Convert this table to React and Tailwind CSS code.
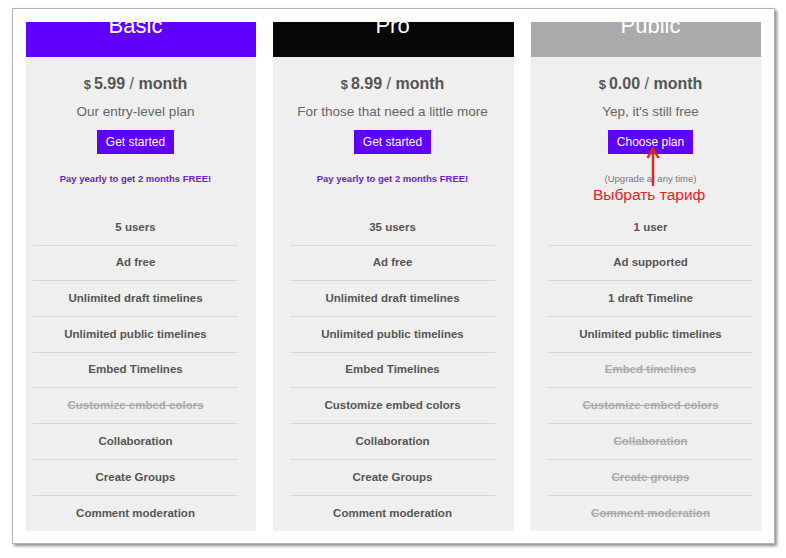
const plans = [
  {
    name: 'Basic',
    price: '5.99',
    tagline: 'Our entry-level plan',
    button: 'Get started',
    note: 'yearly',
    head: 'bg-[#6000ff]',
    width: 'w-[230px]',
    pad: 'pl-[7px] pr-[18px]',
    features: [
      { text: '5 users' },
      { text: 'Ad free' },
      { text: 'Unlimited draft timelines' },
      { text: 'Unlimited public timelines' },
      { text: 'Embed Timelines' },
      { text: 'Customize embed colors', off: true },
      { text: 'Collaboration' },
      { text: 'Create Groups' },
      { text: 'Comment moderation' },
    ],
  },
  {
    name: 'Pro',
    price: '8.99',
    tagline: 'For those that need a little more',
    button: 'Get started',
    note: 'yearly',
    head: 'bg-[#060606]',
    width: 'w-[241px]',
    pad: 'pl-[17px] pr-[19px]',
    features: [
      { text: '35 users' },
      { text: 'Ad free' },
      { text: 'Unlimited draft timelines' },
      { text: 'Unlimited public timelines' },
      { text: 'Embed Timelines' },
      { text: 'Customize embed colors' },
      { text: 'Collaboration' },
      { text: 'Create Groups' },
      { text: 'Comment moderation' },
    ],
  },
  {
    name: 'Public',
    price: '0.00',
    tagline: "Yep, it's still free",
    button: 'Choose plan',
    note: 'upgrade',
    head: 'bg-[#aaaaaa]',
    width: 'w-[230px]',
    pad: 'pl-[17px] pr-[8px]',
    annotated: true,
    features: [
      { text: '1 user' },
      { text: 'Ad supported' },
      { text: '1 draft Timeline' },
      { text: 'Unlimited public timelines' },
      { text: 'Embed timelines', off: true },
      { text: 'Customize embed colors', off: true },
      { text: 'Collaboration', off: true },
      { text: 'Create groups', off: true },
      { text: 'Comment moderation', off: true },
    ],
  },
];

function PlanCard({ plan }) {
  return (
    <div className={`${plan.width} relative bg-[#efefef] flex flex-col`}>
      <div className={`${plan.head} ${plan.pad} h-[35px] overflow-hidden`}>
        <div className="-mt-[7px] text-center text-[22px] leading-[22px] text-white">
          {plan.name}
        </div>
      </div>

      <div className={`${plan.pad} flex flex-col items-center pt-[16.5px]`}>
        <div className="text-[16px] leading-[20px] text-[#555555] whitespace-nowrap">
          <span className="text-[13px] font-bold mr-[3px]">$</span>
          <span className="font-bold">{plan.price}</span>
          <span> / </span>
          <span className="font-bold">month</span>
        </div>
        <div className="mt-[8.5px] text-[13.5px] leading-[18px] text-[#666666] whitespace-nowrap">
          {plan.tagline}
        </div>
        <button className="mt-[9px] h-[24px] px-[8.5px] bg-[#6000ff] text-white text-[12px] leading-[24px]">
          {plan.button}
        </button>
        {plan.note === 'yearly' ? (
          <div className="mt-[19px] text-[9.5px] leading-[12px] font-bold text-[#6a24d6] whitespace-nowrap">
            Pay yearly to get 2 months FREE!
          </div>
        ) : (
          <div className="mt-[19px] text-[9.5px] leading-[12px] text-[#777777] whitespace-nowrap">
            (Upgrade at any time)
          </div>
        )}

        <div className="mt-[25px] w-full">
          {plan.features.map((f, i) => (
            <div
              key={f.text}
              className={`h-[35.7px] flex items-center justify-center text-[11.5px] font-bold ${
                i < plan.features.length - 1 ? 'border-b border-[#d9d9d9]' : ''
              } ${f.off ? 'text-[#ababab] line-through' : 'text-[#555555]'}`}
            >
              {f.text}
            </div>
          ))}
        </div>
      </div>

      {plan.annotated && (
        <>
          <svg
            className="absolute left-[115px] top-[125px]"
            width="14"
            height="40"
            viewBox="0 0 14 40"
          >
            <path d="M7 3 L7 39" stroke="#e3231f" strokeWidth="2.4" />
            <path d="M1.5 11 L7 1.5 L12.5 11" fill="none" stroke="#e3231f" strokeWidth="2.4" />
          </svg>
          <div className="absolute left-[62px] top-[163px] w-[112px] text-center text-[15.5px] leading-[20px] text-[#e3231f] whitespace-nowrap">
            Выбрать тариф
          </div>
        </>
      )}
    </div>
  );
}

export default function App() {
  return (
    <div className="w-[786px] h-[558px] bg-white overflow-hidden font-['Liberation_Sans',Arial,sans-serif]">
      <div className="ml-[12px] mt-[8px] w-[763px] h-[536px] border border-[#b4b4b4] shadow-[2px_2px_3px_rgba(0,0,0,0.45)] bg-white pl-[13px] pt-[13px]">
        <div className="flex gap-[17px] items-start">
          {plans.map((p) => (
            <PlanCard key={p.name} plan={p} />
          ))}
        </div>
      </div>
    </div>
  );
}
